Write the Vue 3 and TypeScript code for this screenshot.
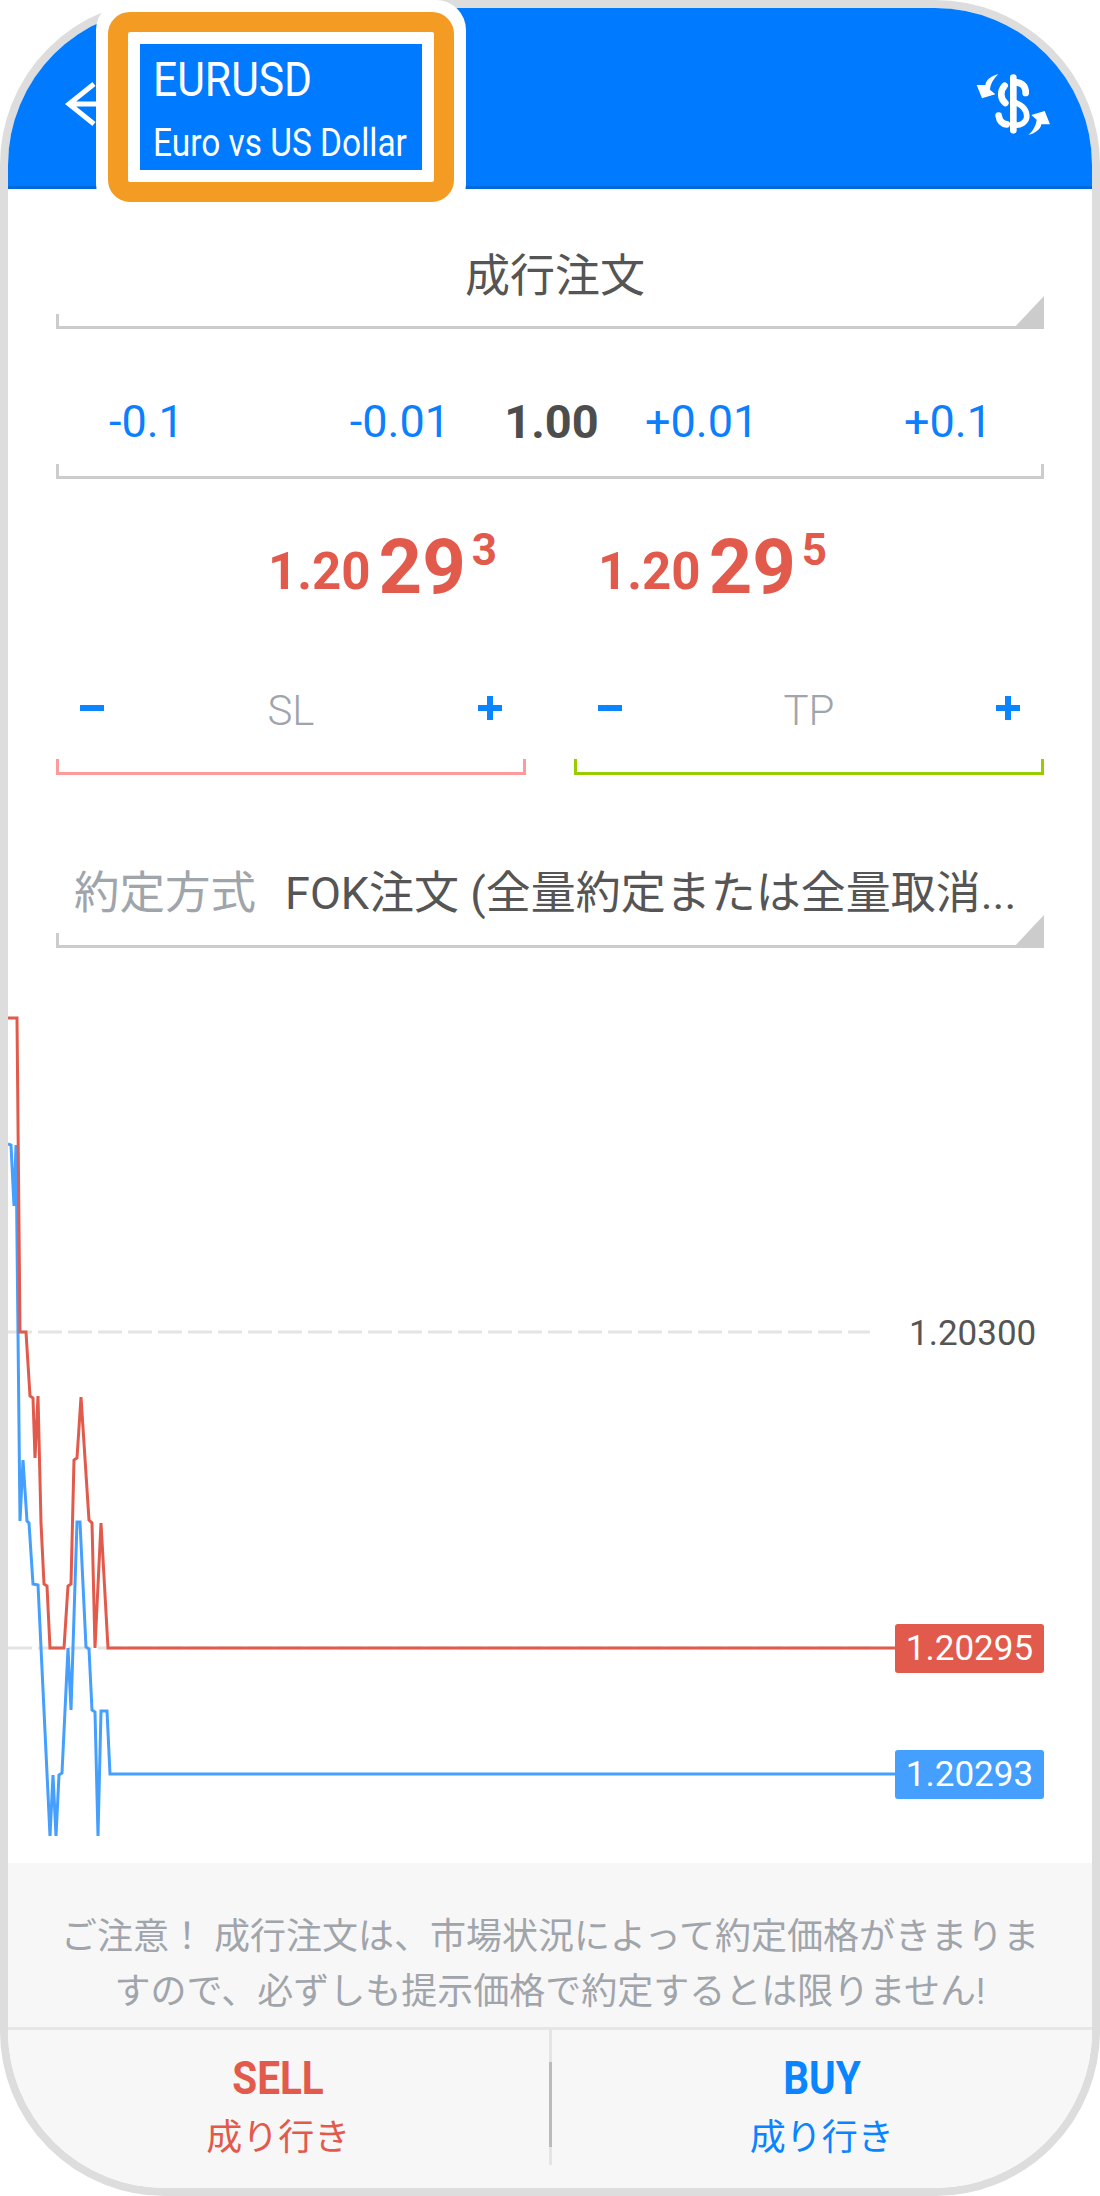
<script setup lang="ts">
const redLine = '8,1018 17,1018 20,1332 26,1332 30,1396 33,1398 35,1458 38,1396 41,1523 44,1584 47,1586 50,1648 64,1648 68,1586 71,1584 74,1460 77,1458 81,1397 89,1520 92,1523 95,1648 101,1523 108,1648 900,1648'
const blueLine = '8,1144 11,1145 14,1206 16,1145 20,1521 23,1460 27,1521 29,1523 33,1584 38,1585 50,1836 53,1775 56,1836 59,1775 62,1773 68,1648 71,1710 77,1522 80,1522 86,1647 89,1649 92,1710 95,1712 98,1836 101,1711 107,1711 110,1774 900,1774'
</script>

<template>
  <div class="page">
    <div class="frame">
      <header class="bar">
        <svg class="back" width="40" height="50" viewBox="0 0 40 50" aria-hidden="true">
          <path d="M32 5 L7 25 L32 45 M7 25 H40" fill="none" stroke="#fff" stroke-width="5" />
        </svg>
        <svg class="swap" width="90" height="80" viewBox="0 0 270 240" aria-hidden="true">
          <path d="M130 38 V196" stroke="#fff" stroke-width="20" stroke-linecap="round" fill="none" />
          <path d="M140 52 C158 54 168 66 167 84 M104 62 C90 78 90 100 106 114 M86 152 C88 166 96 176 110 178" stroke="#fff" stroke-width="20" stroke-linecap="round" fill="none" />
          <path d="M135 112 C160 122 172 138 170 158 C168 172 152 182 135 180" stroke="#fff" stroke-width="17" fill="none" />
          <path d="M85 28 C66 32 48 44 46 60 L20 60 L36 100 L76 88 L60 74 C62 55 72 40 85 28 Z" fill="#fff" />
          <path d="M175 210 C194 206 212 194 214 178 L240 178 L224 138 L184 150 L200 164 C198 183 188 198 175 210 Z" fill="#fff" />
        </svg>
      </header>

      <main class="form">
        <div class="select order">
          <span class="select-title">成行注文</span>
        </div>

        <div class="lots">
          <span class="step s1">-0.1</span>
          <span class="step s2">-0.01</span>
          <strong class="lot">1.00</strong>
          <span class="step s3">+0.01</span>
          <span class="step s4">+0.1</span>
        </div>

        <div class="prices">
          <div class="price p1"><span class="pre">1.20</span><span class="big">29</span><span class="sup">3</span></div>
          <div class="price p2"><span class="pre">1.20</span><span class="big">29</span><span class="sup">5</span></div>
        </div>

        <div class="stops">
          <div class="stop sl">
            <i class="minus"></i><span>SL</span><i class="plus"></i>
          </div>
          <div class="stop tp">
            <i class="minus"></i><span>TP</span><i class="plus"></i>
          </div>
        </div>

        <div class="select fill">
          <span class="fill-label">約定方式</span>
          <span class="fill-value">FOK注文 (全量約定または全量取消...</span>
        </div>
      </main>

      <section class="chart">
        <svg class="plot" width="1084" height="912" viewBox="8 951 1084 912" aria-hidden="true">
          <path d="M8 1332 H870 M8 1648 H870" stroke="#e4e4e4" stroke-width="3" stroke-dasharray="24 6" fill="none" />
          <polyline :points="blueLine" fill="none" stroke="#449ffe" stroke-width="3" />
          <polyline :points="redLine" fill="none" stroke="#e25a4b" stroke-width="3" />
        </svg>
        <span class="axis">1.20300</span>
        <span class="tag ask">1.20295</span>
        <span class="tag bid">1.20293</span>
      </section>

      <footer class="foot">
        <p class="notice">ご注意！ 成行注文は、市場状況によって約定価格がきまりま<br />すので、必ずしも提示価格で約定するとは限りません!</p>
        <div class="actions">
          <div class="action sell"><b>SELL</b><span>成り行き</span></div>
          <i class="split"></i>
          <div class="action buy"><b>BUY</b><span>成り行き</span></div>
        </div>
      </footer>
    </div>

    <div class="mark">
      <div class="mark-orange">
        <div class="mark-white">
          <div class="symbol">
            <div class="sym-main"><span>EURUSD</span></div>
            <div class="sym-sub"><span>Euro vs US Dollar</span></div>
          </div>
        </div>
      </div>
    </div>
  </div>
</template>

<style>
html, body { margin: 0; background: #fff; }
</style>

<style scoped>
.page {
  position: relative;
  width: 1100px;
  height: 2196px;
  font-family: Roboto, "Noto Sans CJK JP", sans-serif;
  color: #555;
}
.frame {
  box-sizing: border-box;
  width: 1100px;
  height: 2196px;
  border: 8px solid #ddd;
  border-radius: 165px;
  overflow: hidden;
  display: flex;
  flex-direction: column;
  background: #fff;
}
.bar {
  box-sizing: border-box;
  flex: none;
  height: 181px;
  background: #007aff;
  border-bottom: 3px solid #0069de;
  display: flex;
  align-items: flex-start;
  justify-content: space-between;
  padding: 71px 32px 0 54px;
}
.swap { margin-top: -14px; }

.form { flex: none; height: 762px; display: flex; flex-direction: column; padding: 0 48px; }

.select {
  position: relative;
  box-sizing: border-box;
  border-bottom: 3px solid #ccc;
}
.select::after {
  content: "";
  position: absolute;
  right: 0;
  bottom: -3px;
  width: 31px;
  height: 33px;
  background: #ccc;
  clip-path: polygon(100% 0, 100% 100%, 0 100%);
}
.select::before {
  content: "";
  position: absolute;
  left: 0;
  bottom: -3px;
  width: 3px;
  height: 15px;
  background: #ccc;
}
.order {
  height: 140px;
  display: flex;
  justify-content: center;
  align-items: flex-end;
  padding-bottom: 17px;
}
.select-title { font-size: 45px; line-height: 64px; margin-left: 10px; }

.lots {
  position: relative;
  box-sizing: border-box;
  height: 150px;
  border-bottom: 3px solid #ccc;
  display: grid;
  grid-template-columns: 200px 225px 141px 211px 211px;
  padding-top: 68px;
  line-height: 50px;
  text-align: center;
}
.lots::before, .lots::after {
  content: "";
  position: absolute;
  bottom: -3px;
  width: 3px;
  height: 15px;
  background: #ccc;
}
.lots::before { left: 0; }
.lots::after { right: 0; }
.step { font-size: 45px; color: #0a80ff; }
.s1 { text-align: left; padding-left: 53px; }
.s2 { text-align: right; padding-right: 31px; }
.s3 { text-align: left; padding-left: 23px; }
.s4 { text-align: right; padding-right: 52px; }
.lot { font-size: 47px; color: #4d4d4d; font-weight: 700; }

.prices { display: flex; height: 130px; position: relative; }
.price { color: #e25a4b; font-weight: 700; display: flex; align-items: flex-start; }
.p1 { margin-left: 212px; }
.p2 { margin-left: 101px; }
.pre { font-size: 51px; line-height: 60px; margin-top: 63px; }
.big { font-size: 76px; line-height: 88px; margin-top: 44px; margin-left: 8px; }
.sup { font-size: 44px; line-height: 52px; margin-top: 45px; margin-left: 6px; }

.stops { display: flex; gap: 48px; height: 165px; }
.stop {
  position: relative;
  box-sizing: border-box;
  flex: 1;
  height: 166px;
  padding: 77px 24px 0;
  display: flex;
  justify-content: space-between;
  align-items: flex-start;
  border-bottom: 3px solid;
  font-size: 42px;
  line-height: 50px;
  color: #a0a4ab;
  font-weight: 300;
}
.stop::before, .stop::after {
  content: "";
  position: absolute;
  bottom: -3px;
  width: 3px;
  height: 16px;
}
.stop::before { left: 0; }
.stop::after { right: 0; }
.sl { border-color: #ff9a9a; }
.sl::before, .sl::after { background: #ff9a9a; }
.tp { border-color: #9c0; }
.tp::before, .tp::after { background: #9c0; }
.minus { width: 24px; height: 6px; background: #0a84ff; margin-top: 19px; }
.plus {
  position: relative;
  width: 24px;
  height: 24px;
  margin-top: 10px;
  background:
    linear-gradient(#0a84ff, #0a84ff) center / 100% 6px no-repeat,
    linear-gradient(#0a84ff, #0a84ff) center / 6px 100% no-repeat;
}

.fill {
  height: 171px;
  margin-top: 3px;
  display: flex;
  align-items: flex-end;
  padding: 0 0 21px 18px;
  gap: 29px;
  line-height: 60px;
  white-space: nowrap;
}
.fill-label { color: #a0a4ab; font-size: 45.5px; }
.fill-value { font-size: 45px; }

.chart { position: relative; flex: 1; min-height: 0; }
.plot { display: block; }
.axis { position: absolute; left: 901px; top: 363px; font-size: 35px; line-height: 40px; }
.tag {
  position: absolute;
  left: 887px;
  width: 149px;
  height: 49px;
  border-radius: 3px;
  color: #fff;
  font-size: 35px;
  line-height: 49px;
  text-align: center;
}
.ask { top: 673px; background: #e25a4b; }
.bid { top: 799px; background: #449ffe; }

.foot { flex: none; height: 325px; background: #f7f7f7; display: flex; flex-direction: column; }
.notice {
  margin: 0;
  height: 167px;
  box-sizing: border-box;
  padding-top: 47px;
  border-bottom: 3px solid #e6e6e6;
  text-align: center;
  font-size: 36px;
  line-height: 55px;
  color: #a0a4ab;
}
.actions { display: flex; flex: 1; align-items: flex-start; }
.split {
  flex: none;
  width: 3px;
  height: 135px;
  background: linear-gradient(#e4e4e4 0 32px, #bbb 32px 117px, #e4e4e4 117px);
}
.action {
  flex: 1;
  display: flex;
  flex-direction: column;
  align-items: center;
  padding-top: 20px;
  font-size: 36px;
  line-height: 50px;
}
.action b { font-size: 46px; line-height: 56px; font-weight: 700; transform: scaleX(.88); }
.action span { margin-top: 7px; }
.sell { color: #e25a4b; }
.buy { color: #0a84ff; }

.mark {
  position: absolute;
  left: 96px;
  top: 0;
  box-sizing: border-box;
  width: 370px;
  height: 214px;
  padding: 12px;
  background: #fff;
  border-radius: 30px;
}
.mark-orange {
  box-sizing: border-box;
  height: 100%;
  border: 20px solid #f49b23;
  border-radius: 22px;
  background: #fff;
  padding: 12px;
}
.mark-white { height: 100%; }
.symbol {
  box-sizing: border-box;
  height: 100%;
  background: #007aff;
  color: #fff;
  padding: 6px 13px 0;
  white-space: nowrap;
}
.sym-main { font-size: 49px; line-height: 60px; }
.sym-sub { font-size: 38px; line-height: 46px; margin-top: 10px; }
.sym-main span, .sym-sub span { display: inline-block; transform-origin: left center; }
.sym-main span { transform: scaleX(.87); }
.sym-sub span { transform: scaleX(.88); }
</style>
